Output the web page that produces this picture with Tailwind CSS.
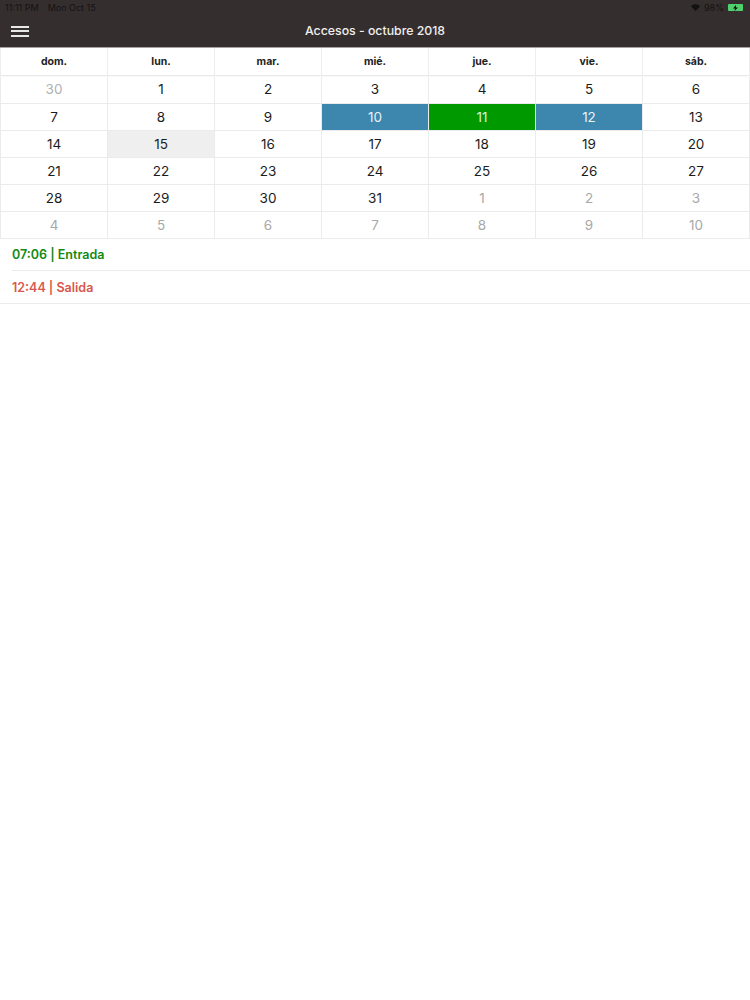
<!DOCTYPE html>
<html lang="es">
<head>
    <meta charset="UTF-8">
    <title>Accesos - octubre 2018</title>
    <script src="https://cdn.jsdelivr.net/npm/@tailwindcss/browser@4"></script>
</head>
<body class="bg-white font-['Inter','Liberation_Sans',sans-serif] w-[750px] h-[1000px] overflow-hidden">

    <!-- Status bar -->
    <div class="bg-[#342e2e] h-[15px] flex items-center justify-between pl-[5px] pr-[7px] text-[9px] text-[#161212]">
        <div class="flex gap-[9px]">
            <span>11:11 PM</span>
            <span>Mon Oct 15</span>
        </div>
        <div class="flex items-center gap-[4px]">
            <svg class="w-[9px] h-[7px]" viewBox="0 0 12 9" fill="#141111"><path d="M6 9 0 2.8C3.4-.6 8.6-.6 12 2.8z"/></svg>
            <span>98%</span>
            <div class="w-[15px] h-[7px] bg-[#4fd06c] rounded-[1px] flex items-center justify-center">
                <svg class="w-[5px] h-[6px]" viewBox="0 0 5 6" fill="#141111"><path d="M3 0 0 3.4h2L1.6 6 5 2.4H3z"/></svg>
            </div>
        </div>
    </div>

    <!-- Nav bar -->
    <div class="bg-[#342e2e] h-[33px] flex items-center border-b border-[#a5a2a2]">
        <div class="ml-[11px] w-[18px] flex flex-col gap-[2.5px]">
            <div class="h-[2px] bg-[#e8e8e8]"></div>
            <div class="h-[2px] bg-[#e8e8e8]"></div>
            <div class="h-[2px] bg-[#e8e8e8]"></div>
        </div>
        <div class="flex-1 text-center text-[#f0eeee] text-[12.3px] font-medium mr-[29px]">Accesos - octubre 2018</div>
    </div>

    <!-- Weekday header -->
    <div class="grid grid-cols-[107px_107px_107px_107px_107px_107px_108px] h-[28px] text-[10.5px] font-bold text-[#222] border-b border-[#e9ebec]">
        <div class="flex items-center justify-center border-l border-[#eceeef]">dom.</div>
        <div class="flex items-center justify-center border-l border-[#eceeef]">lun.</div>
        <div class="flex items-center justify-center border-l border-[#eceeef]">mar.</div>
        <div class="flex items-center justify-center border-l border-[#eceeef]">mié.</div>
        <div class="flex items-center justify-center border-l border-[#eceeef]">jue.</div>
        <div class="flex items-center justify-center border-l border-[#eceeef]">vie.</div>
        <div class="flex items-center justify-center border-x border-[#eceeef]">sáb.</div>
    </div>

    <!-- Days -->
    <div class="grid grid-cols-[107px_107px_107px_107px_107px_107px_108px] auto-rows-[27px] text-[13.5px] text-[#1c1c1c] border-t border-[#f6f7f7]">
        <div class="flex items-center justify-center pb-[2px] border-l border-b border-[#e9ebec] text-[#b0b0b0]">30</div>
        <div class="flex items-center justify-center pb-[2px] border-l border-b border-[#e9ebec]">1</div>
        <div class="flex items-center justify-center pb-[2px] border-l border-b border-[#e9ebec]">2</div>
        <div class="flex items-center justify-center pb-[2px] border-l border-b border-[#e9ebec]">3</div>
        <div class="flex items-center justify-center pb-[2px] border-l border-b border-[#e9ebec]">4</div>
        <div class="flex items-center justify-center pb-[2px] border-l border-b border-[#e9ebec]">5</div>
        <div class="flex items-center justify-center pb-[2px] border-x border-b border-[#e9ebec]">6</div>

        <div class="flex items-center justify-center border-l border-b border-[#e9ebec]">7</div>
        <div class="flex items-center justify-center border-l border-b border-[#e9ebec]">8</div>
        <div class="flex items-center justify-center border-l border-b border-[#e9ebec]">9</div>
        <div class="flex items-center justify-center border-l border-b border-[#e9ebec] bg-[#3d86ae] text-[#e8f1f6]">10</div>
        <div class="flex items-center justify-center border-l border-b border-[#e9ebec] bg-[#009900] text-[#d9f2d9]">11</div>
        <div class="flex items-center justify-center border-l border-b border-[#e9ebec] bg-[#3d86ae] text-[#e8f1f6]">12</div>
        <div class="flex items-center justify-center border-x border-b border-[#e9ebec]">13</div>

        <div class="flex items-center justify-center border-l border-b border-[#e9ebec]">14</div>
        <div class="flex items-center justify-center border-l border-b border-[#e9ebec] bg-[#efefef]">15</div>
        <div class="flex items-center justify-center border-l border-b border-[#e9ebec]">16</div>
        <div class="flex items-center justify-center border-l border-b border-[#e9ebec]">17</div>
        <div class="flex items-center justify-center border-l border-b border-[#e9ebec]">18</div>
        <div class="flex items-center justify-center border-l border-b border-[#e9ebec]">19</div>
        <div class="flex items-center justify-center border-x border-b border-[#e9ebec]">20</div>

        <div class="flex items-center justify-center border-l border-b border-[#e9ebec]">21</div>
        <div class="flex items-center justify-center border-l border-b border-[#e9ebec]">22</div>
        <div class="flex items-center justify-center border-l border-b border-[#e9ebec]">23</div>
        <div class="flex items-center justify-center border-l border-b border-[#e9ebec]">24</div>
        <div class="flex items-center justify-center border-l border-b border-[#e9ebec]">25</div>
        <div class="flex items-center justify-center border-l border-b border-[#e9ebec]">26</div>
        <div class="flex items-center justify-center border-x border-b border-[#e9ebec]">27</div>

        <div class="flex items-center justify-center border-l border-b border-[#e9ebec]">28</div>
        <div class="flex items-center justify-center border-l border-b border-[#e9ebec]">29</div>
        <div class="flex items-center justify-center border-l border-b border-[#e9ebec]">30</div>
        <div class="flex items-center justify-center border-l border-b border-[#e9ebec]">31</div>
        <div class="flex items-center justify-center border-l border-b border-[#e9ebec] text-[#a8a8a8]">1</div>
        <div class="flex items-center justify-center border-l border-b border-[#e9ebec] text-[#a8a8a8]">2</div>
        <div class="flex items-center justify-center border-x border-b border-[#e9ebec] text-[#a8a8a8]">3</div>

        <div class="flex items-center justify-center border-l border-b border-[#e9ebec] text-[#a8a8a8]">4</div>
        <div class="flex items-center justify-center border-l border-b border-[#e9ebec] text-[#a8a8a8]">5</div>
        <div class="flex items-center justify-center border-l border-b border-[#e9ebec] text-[#a8a8a8]">6</div>
        <div class="flex items-center justify-center border-l border-b border-[#e9ebec] text-[#a8a8a8]">7</div>
        <div class="flex items-center justify-center border-l border-b border-[#e9ebec] text-[#a8a8a8]">8</div>
        <div class="flex items-center justify-center border-l border-b border-[#e9ebec] text-[#a8a8a8]">9</div>
        <div class="flex items-center justify-center border-x border-b border-[#e9ebec] text-[#a8a8a8]">10</div>
    </div>

    <!-- Access list -->
    <div class="text-[12.5px] font-semibold">
        <div class="ml-[12px] h-[32px] pt-[2px] flex items-center border-b border-[#e9ebec] text-[#138a13]">07:06 | Entrada</div>
        <div class="h-[33px] pt-[2px] pl-[12px] flex items-center border-b border-[#e9ebec] text-[#d9574b]">12:44 | Salida</div>
    </div>

</body>
</html>
